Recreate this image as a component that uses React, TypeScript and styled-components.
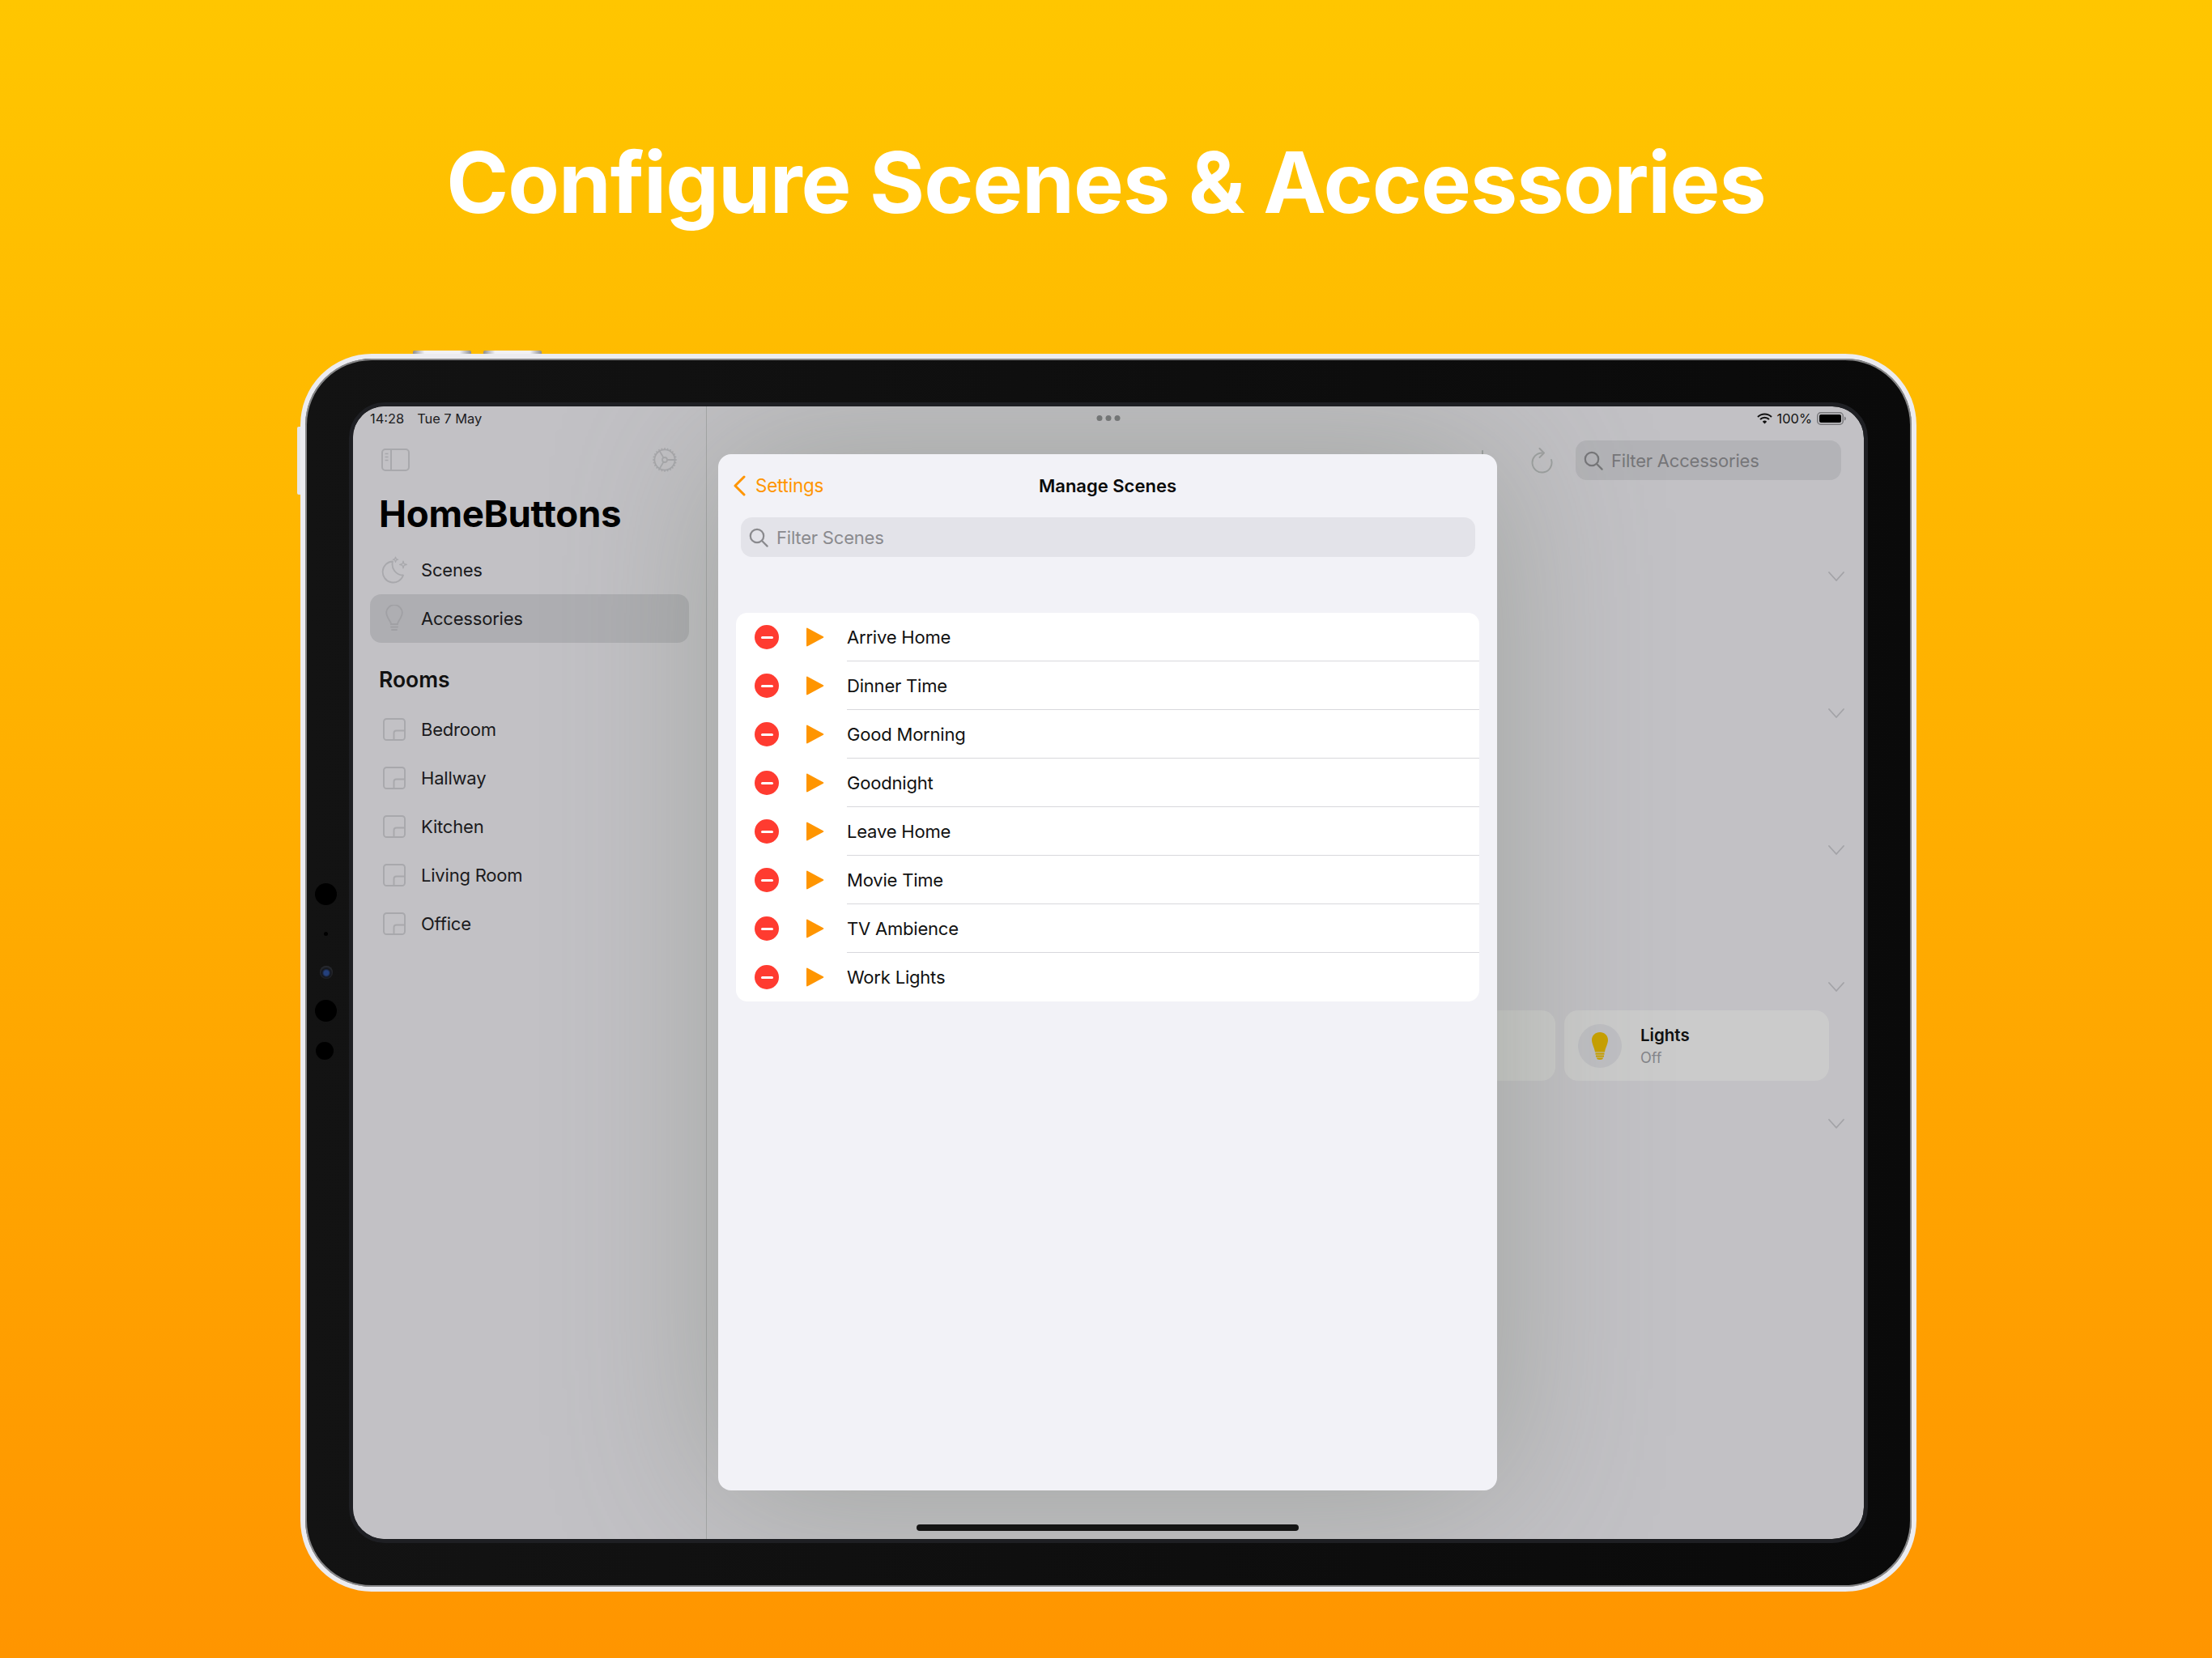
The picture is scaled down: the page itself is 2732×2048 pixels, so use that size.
import {createGlobalStyle, styled} from 'styled-components';

const GlobalStyle = createGlobalStyle`
    html, body {
        margin: 0;
        padding: 0;
    }
    body {
        font-family: Inter, "Liberation Sans", sans-serif;
    }
`;

const Page = styled.div`
    width: 2732px;
    height: 2048px;
    overflow: hidden;
    background: linear-gradient(180deg, #ffc600 0%, #ff9500 100%);
`;

const Headline = styled.h1`
    margin: 0;
    height: 437px;
    padding-top: 160px;
    box-sizing: border-box;
    text-align: center;
    font-size: 104px;
    line-height: 130px;
    font-weight: 700;
    letter-spacing: -1px;
    color: #fff;
`;

const Device = styled.div`
    position: relative;
    width: 1996px;
    height: 1529px;
    margin-left: 371px;
    box-sizing: border-box;
    padding: 54px;
    border: 6px solid #ececf0;
    border-radius: 88px;
    background: linear-gradient(90deg, #131313, #0a0a0a);
    box-shadow: inset 0 0 0 2px #858586;
`;

const HardwareButton = styled.div<{$left: number}>`
    position: absolute;
    top: -10px;
    left: ${p => p.$left}px;
    width: 72px;
    height: 4px;
    border-radius: 2px 2px 0 0;
    background: linear-gradient(90deg, #8d8d8f, #f2f2f4 20%, #f2f2f4 80%, #8d8d8f);
`;

const SideButton = styled.div`
    position: absolute;
    top: 84px;
    left: -10px;
    width: 4px;
    height: 84px;
    border-radius: 2px 0 0 2px;
    background: #e6e6e9;
`;

const BezelDot = styled.div<{$top: number; $size: number; $left?: number}>`
    position: absolute;
    top: ${p => p.$top}px;
    left: ${p => p.$left ?? 25.5 - p.$size / 2}px;
    width: ${p => p.$size}px;
    height: ${p => p.$size}px;
    border-radius: 50%;
    background: #000;
`;

const Lens = styled(BezelDot)`
    background: radial-gradient(circle at 50% 55%, #24407c 0 24%, #14161c 45%, #44464c 100%);
`;

const Screen = styled.div`
    position: relative;
    display: flex;
    height: 100%;
    box-sizing: border-box;
    overflow: hidden;
    border: 5px solid #1e1f23;
    border-radius: 44px;
    background: #c2c1c5;
    background-clip: padding-box;
    color: #111;
`;

const Sidebar = styled.aside`
    width: 437px;
    flex: none;
    box-sizing: border-box;
    padding: 0 21px;
    border-right: 1px solid #a6a7a8;
    background: #c2c1c5;
`;

const StatusRow = styled.div`
    display: flex;
    align-items: center;
    height: 30px;
    font-size: 16.4px;
    color: #1c1c1e;
`;

const StatusDate = styled.span`
    margin-left: 16px;
`;

const SideToolbar = styled.div`
    display: flex;
    justify-content: space-between;
    align-items: center;
    height: 72px;
    padding: 0 14px;
`;

const AppTitle = styled.h2`
    margin: 3px 0 0 11px;
    height: 56px;
    font-size: 45.6px;
    line-height: 56px;
    font-weight: 700;
    letter-spacing: -0.3px;
    color: #000;
`;

const NavRow = styled.div<{$active?: boolean}>`
    display: flex;
    align-items: center;
    height: 60px;
    padding-left: 14px;
    gap: 17px;
    border-radius: 14px;
    font-size: 22px;
    letter-spacing: -0.2px;
    color: #1a1a1c;
    background: ${p => (p.$active ? '#aeaeb2' : 'transparent')};
    svg {
        flex: none;
    }
`;

const NavList = styled.div`
    margin-top: 11px;
`;

const RoomsTitle = styled.h3`
    margin: 28px 0 15px 11px;
    height: 34px;
    font-size: 26.5px;
    line-height: 34px;
    font-weight: 600;
    color: #111;
`;

const Main = styled.main`
    flex: 1;
    box-sizing: border-box;
    min-width: 0;
    padding-right: 28px;
`;

const MainStatus = styled(StatusRow)`
    justify-content: flex-end;
    gap: 6px;
    margin-right: -6px;
    color: #111;
`;

const MainToolbar = styled.div`
    display: flex;
    justify-content: flex-end;
    align-items: center;
    gap: 28px;
    margin-top: 12px;
`;

const HiddenAction = styled.svg`
    margin-right: 19px;
`;

const SearchField = styled.div<{$wide?: boolean}>`
    display: flex;
    align-items: center;
    gap: 10px;
    height: 49px;
    box-sizing: border-box;
    padding-left: 10px;
    border-radius: 14px;
    font-size: 22px;
    letter-spacing: -0.2px;
    width: ${p => (p.$wide ? 'auto' : '328px')};
    color: ${p => (p.$wide ? '#8a8a8e' : '#767679')};
    background: ${p => (p.$wide ? '#e3e3e9' : '#b3b3b7')};
    margin: ${p => (p.$wide ? '0 27px 0 28px' : '0')};
`;

const Section = styled.section`
    height: 169px;
    box-sizing: border-box;
`;

const Sections = styled.div`
    margin-top: 113px;
`;

const ChevronSlot = styled.div`
    display: flex;
    justify-content: flex-end;
    height: 30px;
    margin-right: -4px;
`;

const Cards = styled.div`
    display: flex;
    justify-content: flex-end;
    gap: 11px;
    margin: 5px 15px 0 0;
`;

const Card = styled.div<{$width: number}>`
    display: flex;
    align-items: center;
    gap: 23px;
    width: ${p => p.$width}px;
    height: 87px;
    box-sizing: border-box;
    padding-left: 17px;
    border-radius: 17px;
    background: #cbcbcb;
`;

const BulbCircle = styled.div`
    display: flex;
    align-items: center;
    justify-content: center;
    width: 54px;
    height: 54px;
    border-radius: 50%;
    background: #bfbfc3;
`;

const CardName = styled.div`
    font-size: 20.5px;
    line-height: 26px;
    font-weight: 600;
    color: #111;
`;

const CardState = styled.div`
    margin-top: 4px;
    font-size: 18px;
    line-height: 22px;
    color: #85858a;
`;

const Grabber = styled.div`
    position: absolute;
    top: 11px;
    left: 50%;
    display: flex;
    gap: 4px;
    transform: translateX(-50%);
`;

const GrabberDot = styled.span`
    width: 7px;
    height: 7px;
    border-radius: 50%;
    background: #76777a;
`;

const Sheet = styled.div`
    position: absolute;
    top: 59px;
    left: 451px;
    width: 962px;
    height: 1280px;
    border-radius: 16px;
    background: #f2f2f7;
    box-shadow: 0 0 200px rgba(100, 110, 92, 0.36);
`;

const SheetBar = styled.div`
    position: relative;
    display: flex;
    align-items: center;
    justify-content: center;
    height: 78px;
`;

const BackLink = styled.div`
    position: absolute;
    left: 19px;
    top: 25px;
    display: flex;
    align-items: center;
    gap: 12px;
    font-size: 22.4px;
    letter-spacing: -0.2px;
    line-height: 28px;
    color: #ff9500;
`;

const SheetTitle = styled.div`
    font-size: 22px;
    font-weight: 600;
    color: #0a0a0a;
`;

const SceneList = styled.ul`
    margin: 69px 22px 0;
    padding: 0;
    list-style: none;
    overflow: hidden;
    border-radius: 14px;
    background: #fff;
`;

const SceneRow = styled.li`
    display: flex;
    align-items: center;
    height: 60px;
    padding-left: 23px;
`;

const RemoveBadge = styled.span`
    display: flex;
    align-items: center;
    justify-content: center;
    flex: none;
    width: 30px;
    height: 30px;
    border-radius: 50%;
    background: #ff3b30;
    &::before {
        content: '';
        width: 15px;
        height: 3px;
        border-radius: 2px;
        background: #fff;
    }
`;

const PlayMark = styled.svg`
    flex: none;
    margin-left: 33px;
`;

const SceneName = styled.div<{$last: boolean}>`
    flex: 1;
    display: flex;
    align-items: center;
    height: 100%;
    margin-left: 28px;
    box-sizing: border-box;
    font-size: 22px;
    letter-spacing: -0.2px;
    color: #111;
    border-bottom: ${p => (p.$last ? 'none' : '1.5px solid #d8d8dc')};
`;

const HomeBar = styled.div`
    position: absolute;
    left: 696px;
    bottom: 10px;
    width: 472px;
    height: 8px;
    border-radius: 4px;
    background: #141414;
`;

const ghost = '#a8a8ac';

function SearchGlyph({color}: {color: string}) {
    return (
        <svg width="24" height="24" viewBox="0 0 24 24" fill="none" stroke={color} strokeWidth="2.2" strokeLinecap="round">
            <circle cx="10" cy="10" r="8.2" />
            <path d="M16 16l6.6 6.6" />
        </svg>
    );
}

function SidebarGlyph() {
    return (
        <svg width="35" height="28" viewBox="0 0 35 28" fill="none" stroke={ghost} strokeWidth="2">
            <rect x="1" y="1" width="33" height="26" rx="4" />
            <path d="M12 1v26" />
            <path d="M4.5 6.5h4M4.5 10.5h4M4.5 14.5h4" strokeWidth="1.6" />
        </svg>
    );
}

function GearGlyph() {
    const teeth = Array.from({length: 24}, (_, i) => i * 15);
    return (
        <svg width="32" height="32" viewBox="0 0 32 32" fill="none" stroke={ghost} strokeWidth="1.8">
            <circle cx="16" cy="16" r="12.6" />
            <circle cx="16" cy="16" r="3" />
            <path d="M19 16h9.600M14.500 13.400L9.700 5.100M14.500 18.600L9.700 26.900" />
            {teeth.map(a => (
                <path key={a} d="M16 1.2v2.4" strokeWidth="1.6" transform={`rotate(${a} 16 16)`} />
            ))}
        </svg>
    );
}

function MoonGlyph() {
    return (
        <svg width="32" height="34" viewBox="0 0 32 34" fill="none" stroke={ghost} strokeWidth="1.8" strokeLinejoin="round">
            <path d="M14 6.5A13 13 0 1 0 27 23.5 13.5 13.5 0 0 1 14 6.5Z" />
            <path d="M17.5 1l.8 2.4 2.4.8-2.4.8-.8 2.4-.8-2.4-2.4-.8 2.4-.8ZM27 6l1 3.4 3.4 1-3.4 1-1 3.4-1-3.4-3.4-1 3.4-1Z" strokeWidth="1.2" />
        </svg>
    );
}

function BulbOutline() {
    return (
        <svg width="32" height="34" viewBox="0 0 32 34" fill="none" stroke="#a0a0a4" strokeWidth="1.8" strokeLinecap="round">
            <path d="M12 24c0-4-5.800-8-5.800-14a9.800 9.800 0 0 1 19.600 0c0 6-5.800 10-5.800 14Z" />
            <path d="M12 27.500h8M13 31h6" />
        </svg>
    );
}

function RoomGlyph() {
    return (
        <svg width="32" height="28" viewBox="0 0 32 28" fill="none" stroke={ghost} strokeWidth="1.9">
            <rect x="3" y="1" width="26" height="26" rx="3.500" />
            <path d="M15.500 27v-8.500a3 3 0 0 1 3-3H29" />
        </svg>
    );
}

function Chevron() {
    return (
        <svg width="20" height="12" viewBox="0 0 20 12" fill="none" stroke="#a3a3a7" strokeWidth="1.8" strokeLinecap="round" strokeLinejoin="round">
            <path d="M1 1l9 10 9-10" />
        </svg>
    );
}

function Wifi() {
    return (
        <svg width="19" height="14" viewBox="0 0 19 14" fill="none" stroke="#111" strokeWidth="2">
            <path d="M1 5a12 12 0 0 1 17 0M4 8a7.800 7.800 0 0 1 11 0" />
            <path d="M9.500 13.500L6.800 10.800a3.800 3.800 0 0 1 5.400 0Z" fill="#111" stroke="none" />
        </svg>
    );
}

function Battery() {
    return (
        <svg width="36" height="16" viewBox="0 0 36 16" fill="none">
            <rect x="0.750" y="0.750" width="31.500" height="14.500" rx="4" stroke="#77777a" strokeWidth="1.500" />
            <rect x="3" y="3" width="27" height="10" rx="2" fill="#000" />
            <path d="M34 5.500c1.200.5 1.800 1.400 1.800 2.500s-.6 2-1.800 2.500Z" fill="#77777a" />
        </svg>
    );
}

function Refresh() {
    return (
        <svg width="27" height="32" viewBox="0 0 27 32" fill="none" stroke="#9da0a0" strokeWidth="1.9" strokeLinecap="round" strokeLinejoin="round">
            <path d="M13.500 6.500A12 12 0 1 0 25 15" />
            <path d="M10.500 1l5.500 5.500-5.500 5.500" />
        </svg>
    );
}

function SolidBulb() {
    return (
        <svg width="20" height="34" viewBox="0 0 20 34" fill="#c9a100">
            <path d="M10 0c5.500 0 10 4 10 9.500 0 5-3 9-4 15H4c-1-6-4-10-4-15C0 4 4.500 0 10 0Z" />
            <rect x="4.500" y="25.500" width="11" height="2.200" />
            <rect x="5" y="28.500" width="10" height="2.200" />
            <path d="M6 31.500h8a4 2.500 0 0 1-8 0Z" />
        </svg>
    );
}

const rooms = ['Bedroom', 'Hallway', 'Kitchen', 'Living Room', 'Office'];
const scenes = ['Arrive Home', 'Dinner Time', 'Good Morning', 'Goodnight', 'Leave Home', 'Movie Time', 'TV Ambience', 'Work Lights'];

function App() {
    return (
        <Page>
            <GlobalStyle />
            <Headline>Configure Scenes &amp; Accessories</Headline>
            <Device>
                <HardwareButton $left={133} />
                <HardwareButton $left={220} />
                <SideButton />
                <BezelDot $top={648} $size={27} />
                <BezelDot $top={708} $size={5} />
                <Lens $top={750} $size={16} />
                <BezelDot $top={792} $size={27} />
                <BezelDot $top={844} $size={22} $left={13} />
                <Screen>
                    <Sidebar>
                        <StatusRow>
                            14:28
                            <StatusDate>Tue 7 May</StatusDate>
                        </StatusRow>
                        <SideToolbar>
                            <SidebarGlyph />
                            <GearGlyph />
                        </SideToolbar>
                        <AppTitle>HomeButtons</AppTitle>
                        <NavList>
                            <NavRow>
                                <MoonGlyph />
                                Scenes
                            </NavRow>
                            <NavRow $active>
                                <BulbOutline />
                                Accessories
                            </NavRow>
                        </NavList>
                        <RoomsTitle>Rooms</RoomsTitle>
                        {rooms.map(room => (
                            <NavRow key={room}>
                                <RoomGlyph />
                                {room}
                            </NavRow>
                        ))}
                    </Sidebar>
                    <Main>
                        <MainStatus>
                            <Wifi />
                            100%
                            <Battery />
                        </MainStatus>
                        <MainToolbar>
                            <HiddenAction width="26" height="26" viewBox="0 0 26 26" fill="none" stroke="#9da0a0" strokeWidth="2" strokeLinecap="round">
                                <path d="M13 1v24M1 13h24" />
                            </HiddenAction>
                            <Refresh />
                            <SearchField>
                                <SearchGlyph color="#767679" />
                                Filter Accessories
                            </SearchField>
                        </MainToolbar>
                        <Sections>
                            <Section>
                                <ChevronSlot>
                                    <Chevron />
                                </ChevronSlot>
                            </Section>
                            <Section>
                                <ChevronSlot>
                                    <Chevron />
                                </ChevronSlot>
                            </Section>
                            <Section>
                                <ChevronSlot>
                                    <Chevron />
                                </ChevronSlot>
                            </Section>
                            <Section>
                                <ChevronSlot>
                                    <Chevron />
                                </ChevronSlot>
                                <Cards>
                                    <Card $width={327} />
                                    <Card $width={327}>
                                        <BulbCircle>
                                            <SolidBulb />
                                        </BulbCircle>
                                        <div>
                                            <CardName>Lights</CardName>
                                            <CardState>Off</CardState>
                                        </div>
                                    </Card>
                                </Cards>
                            </Section>
                            <Section>
                                <ChevronSlot>
                                    <Chevron />
                                </ChevronSlot>
                            </Section>
                        </Sections>
                    </Main>
                    <Grabber>
                        <GrabberDot />
                        <GrabberDot />
                        <GrabberDot />
                    </Grabber>
                    <Sheet>
                        <SheetBar>
                            <BackLink>
                                <svg width="15" height="26" viewBox="0 0 15 26" fill="none" stroke="#ff9500" strokeWidth="3" strokeLinecap="round" strokeLinejoin="round">
                                    <path d="M13 2L2 13l11 11" />
                                </svg>
                                Settings
                            </BackLink>
                            <SheetTitle>Manage Scenes</SheetTitle>
                        </SheetBar>
                        <SearchField $wide>
                            <SearchGlyph color="#8a8a8e" />
                            Filter Scenes
                        </SearchField>
                        <SceneList>
                            {scenes.map((scene, i) => (
                                <SceneRow key={scene}>
                                    <RemoveBadge />
                                    <PlayMark width="23" height="24" viewBox="0 0 23 24">
                                        <path d="M1 1.500v21c0 .8.7 1.100 1.300.8l19.500-10.500c.6-.4.6-1.200 0-1.600L2.300.700C1.700.400 1 .700 1 1.500Z" fill="#ff9500" />
                                    </PlayMark>
                                    <SceneName $last={i === scenes.length - 1}>{scene}</SceneName>
                                </SceneRow>
                            ))}
                        </SceneList>
                    </Sheet>
                    <HomeBar />
                </Screen>
            </Device>
        </Page>
    );
}

export default App;
